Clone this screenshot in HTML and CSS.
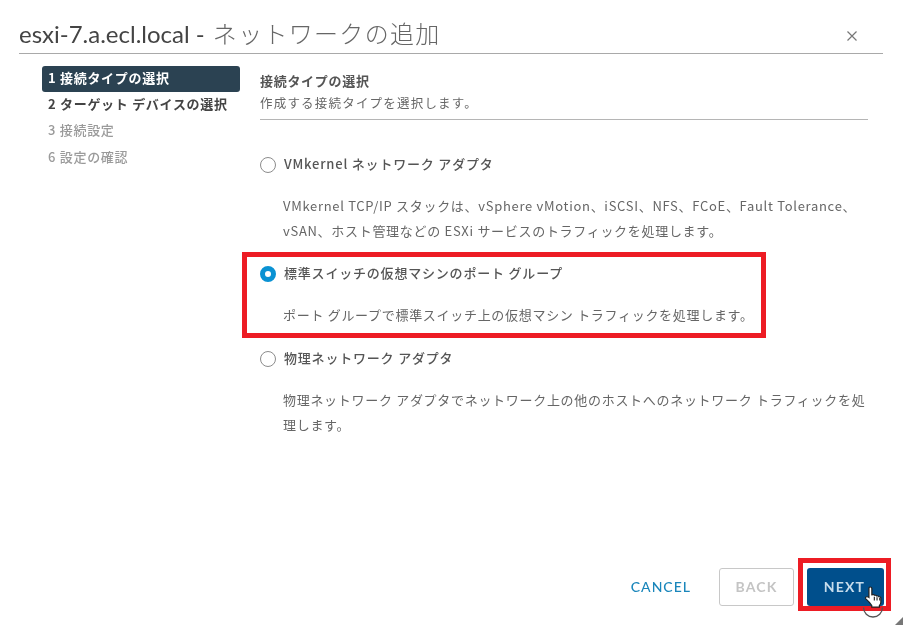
FILE: index.html
```html
<!DOCTYPE html>
<html lang="ja">
<head>
<meta charset="utf-8">
<title>ネットワークの追加</title>
<link rel="stylesheet" href="styles.css">
</head>
<body>
<div class="dialog">
  <header class="head">
    <h1 class="title">esxi-7.a.ecl.local - <span class="title-ja">ネットワークの追加</span></h1>
    <svg class="close" width="12" height="12" viewBox="0 0 12 12"><path d="M1.500 1.500L10.500 10.500M10.500 1.500L1.500 10.500" stroke="#777" stroke-width="1.200" fill="none"/></svg>
  </header>
  <div class="body">
    <nav class="steps">
      <div class="step active">1 接続タイプの選択</div>
      <div class="step current">2 ターゲット デバイスの選択</div>
      <div class="step">3 接続設定</div>
      <div class="step">6 設定の確認</div>
    </nav>
    <main class="main">
      <div class="main-head">
        <div class="main-title">接続タイプの選択</div>
        <div class="main-sub">作成する接続タイプを選択します。</div>
      </div>
      <div class="option first">
        <div class="opt-label"><span class="radio"></span><span class="opt-text">VMkernel ネットワーク アダプタ</span></div>
        <p class="opt-desc">VMkernel TCP/IP スタックは、vSphere vMotion、iSCSI、NFS、FCoE、Fault Tolerance、vSAN、ホスト管理などの ESXi サービスのトラフィックを処理します。</p>
      </div>
      <div class="option selected">
        <div class="opt-label"><span class="radio on"></span><span class="opt-text">標準スイッチの仮想マシンのポート グループ</span></div>
        <p class="opt-desc">ポート グループで標準スイッチ上の仮想マシン トラフィックを処理します。</p>
      </div>
      <div class="option third">
        <div class="opt-label"><span class="radio"></span><span class="opt-text">物理ネットワーク アダプタ</span></div>
        <p class="opt-desc">物理ネットワーク アダプタでネットワーク上の他のホストへのネットワーク トラフィックを処理します。</p>
      </div>
    </main>
  </div>
  <footer class="foot">
    <span class="btn-cancel">CANCEL</span>
    <span class="btn-back">BACK</span>
    <span class="next-wrap">
      <span class="btn-next">NEXT</span>
      <svg class="cursor" width="18" height="23" viewBox="0.5 0.5 16 24.500" preserveAspectRatio="none"><path d="M5 1.500c1 0 1.600.7 1.600 1.700V10l1-.3c.8-.1 1.300.2 1.600.8.8-.3 1.500 0 1.800.7.8-.3 1.600 0 1.900.8.9-.2 1.700.3 1.700 1.300v4.400c0 1.600-.6 2.600-1.300 3.600v1.700H6.500v-1.700C5 18.500 3.500 16.500 1.500 14.500c-.8-.9-.7-1.900.1-2.400.8-.5 1.600-.2 2.400.6V3.200c0-1 .4-1.700 1-1.700z" fill="#fff" stroke="#222" stroke-width="1.100"/><path d="M8.800 12v4M11.200 12.500v3.500M13.600 13v3" stroke="#222" stroke-width="1" fill="none"/></svg>
    </span>
  </footer>
  <svg class="ring" width="22" height="12" viewBox="0 0 22 12"><path d="M1.500 1.500a9.500 9.500 0 0 0 19 0" stroke="#555" stroke-width="1.300" fill="none"/></svg>
  <svg class="grip" width="10" height="10" viewBox="0 0 10 10"><path d="M9 1V9H1Z" fill="#777"/></svg>
</div>
</body>
</html>
```
FILE: styles.css
```css
* { box-sizing: border-box; }
html, body { margin: 0; padding: 0; background: #fff; }
body {
  width: 908px;
  height: 630px;
  overflow: hidden;
  font-family: "Noto Sans CJK JP", "Noto Sans", sans-serif;
  color: #555;
}
.dialog {
  position: relative;
  width: 908px;
  height: 630px;
  display: flex;
  flex-direction: column;
  padding: 0 25px 0 19px;
}
.head {
  height: 54px;
  flex: none;
  display: flex;
  align-items: center;
  justify-content: space-between;
  border-bottom: 1px solid #a9a9a9;
  padding: 13px 25px 0 0;
}
.title, .step, .main-title, .main-sub, .opt-text, .opt-desc, .btn-cancel, .btn-back, .btn-next {
  filter: blur(.4px);
}
.title {
  margin: 0;
  font-family: "Lato", "Noto Sans CJK JP", sans-serif;
  font-weight: 400;
  font-size: 24px;
  line-height: 28px;
  color: #444;
  white-space: nowrap;
}
.title-ja { margin-left: 2px; font-family: "Noto Sans CJK JP", sans-serif; font-weight: 300; font-size: 24px; letter-spacing: 1.300px; color: #666; }
.close { flex: none; margin-top: 6px; }
.body {
  flex: 1;
  display: flex;
  padding: 12px 15px 0 23px;
}
.steps {
  width: 198px;
  flex: none;
  display: flex;
  flex-direction: column;
}
.step {
  height: 26.500px;
  padding-left: 6px;
  font-size: 13px;
  font-weight: 500;
  line-height: 24px;
  letter-spacing: .7px;
  color: #9a9a9a;
  white-space: nowrap;
}
.step.active {
  height: 25.500px;
  background: #2b4252;
  border-radius: 3px;
  color: #fff;
  font-weight: 700;
}
.step.current { color: #444; font-weight: 700; }
.main {
  width: 608px;
  margin-left: 20px;
  flex: none;
}
.main-head {
  height: 54px;
  border-bottom: 1px solid #b5b5b5;
  padding-top: 6px;
}
.main-title { font-size: 13px; line-height: 18px; font-weight: 700; letter-spacing: .7px; color: #555; }
.main-sub { font-size: 12.500px; line-height: 20px; margin-top: 3px; color: #666; letter-spacing: 1.200px; white-space: nowrap; }
.option { width: 608px; }
.option.first { margin-top: 31px; height: 109px; }
.option.selected { height: 85px; }
.opt-label {
  display: flex;
  align-items: center;
  height: 24px;
  font-size: 13px;
  font-weight: 500;
  color: #555;
  letter-spacing: .8px;
  white-space: nowrap;
}
.radio {
  width: 16px;
  height: 16px;
  flex: none;
  margin: 3px 8px 0 0;
  border: 1px solid #8c8c8c;
  border-radius: 50%;
  background: #fff;
}
.radio.on { border: 5px solid #0a92d3; }
.opt-desc {
  margin: 17.500px 0 0;
  padding-left: 23px;
  font-size: 13px;
  line-height: 25px;
  color: #666;
  letter-spacing: .7px;
}
.selected::after {
  content: "";
  box-sizing: border-box;
  position: absolute;
  left: 242px;
  top: 252px;
  width: 524px;
  height: 86px;
  border: 5px solid #ed1c24;
  pointer-events: none;
}
.foot {
  height: 72px;
  flex: none;
  display: flex;
  align-items: flex-start;
  justify-content: flex-end;
}
.btn-cancel {
  margin: 10px 28px 0 0;
  height: 38px;
  line-height: 38px;
  font-family: "Lato", sans-serif;
  font-size: 14px;
  font-weight: 500;
  letter-spacing: 1px;
  color: #1a86bb;
}
.btn-back {
  width: 75px;
  height: 38px;
  margin: 10px 4px 0 0;
  line-height: 36px;
  text-align: center;
  border: 1px solid #c8c8c8;
  border-radius: 3px;
  font-family: "Lato", sans-serif;
  font-size: 14px;
  font-weight: 700;
  letter-spacing: 1.200px;
  color: #c4c4c4;
}
.next-wrap {
  position: relative;
  display: block;
  flex: none;
  width: 93px;
  height: 53px;
  margin-right: -8px;
  border: 5px solid #ed1c24;
  background: #fff;
  padding: 5px 2px 0 4px;
}
.btn-next {
  display: block;
  height: 38px;
  line-height: 38px;
  text-align: center;
  background: #004f8c;
  border-radius: 3px;
  font-family: "Lato", sans-serif;
  font-size: 14px;
  font-weight: 700;
  letter-spacing: 1.200px;
  padding-right: 2px;
  color: #c6dcec;
}
.cursor { position: absolute; left: 62px; top: 23px; }
.ring { position: absolute; left: 862px; top: 606px; }
.grip { position: absolute; left: 894px; top: 616px; }
```
